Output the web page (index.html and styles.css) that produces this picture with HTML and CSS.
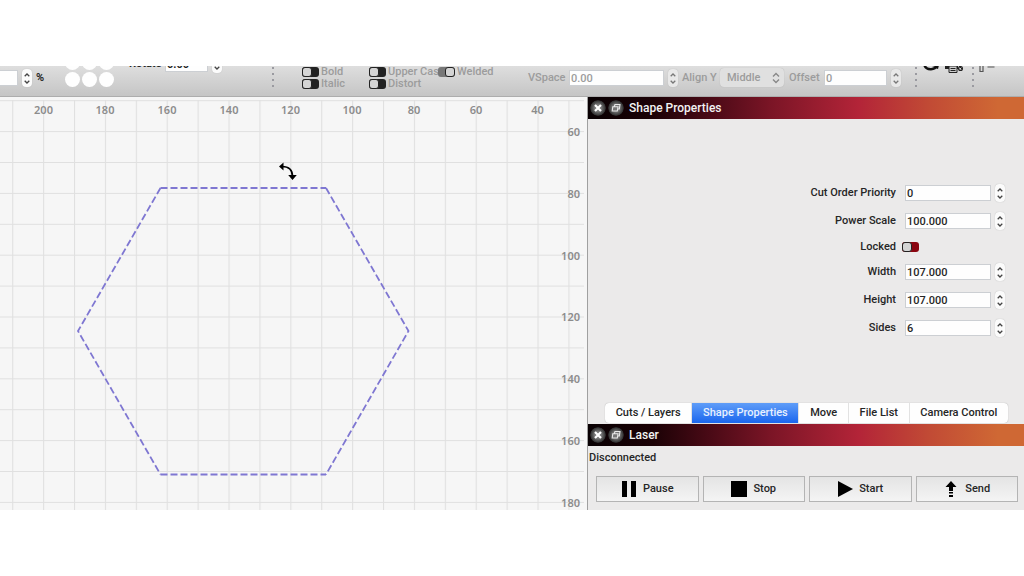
FILE: index.html
```html
<!DOCTYPE html>
<html lang="en">
<head>
<meta charset="utf-8">
<title>Shape Properties</title>
<link rel="stylesheet" href="styles.css">
</head>
<body>
<svg class="symbols" aria-hidden="true">
  <symbol id="up" viewBox="0 0 6 4"><path d="M.7 3.2 3 1l2.300 2.200" fill="none" stroke="currentColor" stroke-width="1.300"/></symbol>
  <symbol id="down" viewBox="0 0 6 4"><path d="M.7.8 3 3 5.300.8" fill="none" stroke="currentColor" stroke-width="1.300"/></symbol>
  <symbol id="close" viewBox="0 0 16 16"><path d="M5 5l6 6M11 5l-6 6" stroke="#fff" stroke-width="2.200"/></symbol>
  <symbol id="float" viewBox="0 0 16 16"><path d="M6.300 6.500 7 4.500H12L11.300 9H10M4.800 6.800H10L9.300 11H4.200Z" fill="none" stroke="#e8e8e8" stroke-width="1.100"/></symbol>
</svg>
<main class="app">
  <header class="toolbar">
    <div class="group scale">
      <input class="field" id="scale" type="text" aria-label="Scale percent">
      <span class="stepper"><button aria-label="Increase scale"><svg><use href="#up"/></svg></button><button aria-label="Decrease scale"><svg><use href="#down"/></svg></button></span>
      <label class="dark" for="scale">%</label>
    </div>
    <div class="anchors" role="group" aria-label="Anchor point">
      <input type="radio" name="anchor" aria-label="Top left"><input type="radio" name="anchor" aria-label="Top"><input type="radio" name="anchor" aria-label="Top right">
      <input type="radio" name="anchor" aria-label="Left"><input type="radio" name="anchor" aria-label="Center"><input type="radio" name="anchor" aria-label="Right">
      <input type="radio" name="anchor" aria-label="Bottom left"><input type="radio" name="anchor" aria-label="Bottom"><input type="radio" name="anchor" aria-label="Bottom right">
    </div>
    <div class="group rotate">
      <label class="dark" for="rotate">Rotate</label>
      <input class="field dark" id="rotate" type="text" value="0.00">
      <span class="stepper"><button aria-label="Increase rotation"><svg><use href="#up"/></svg></button><button aria-label="Decrease rotation"><svg><use href="#down"/></svg></button></span>
    </div>
    <div class="dots"></div>
    <div class="checks weight">
      <label><input class="toggle" type="checkbox">Bold</label>
      <label><input class="toggle" type="checkbox">Italic</label>
    </div>
    <div class="checks casing">
      <label><input class="toggle" type="checkbox">Upper Case</label>
      <label><input class="toggle" type="checkbox">Distort</label>
    </div>
    <div class="checks welded">
      <label><input class="toggle" type="checkbox" checked>Welded</label>
    </div>
    <div class="group vspace">
      <label for="vspace">VSpace</label>
      <input class="field" id="vspace" type="text" value="0.00">
      <span class="stepper"><button aria-label="Increase VSpace"><svg><use href="#up"/></svg></button><button aria-label="Decrease VSpace"><svg><use href="#down"/></svg></button></span>
    </div>
    <div class="group align">
      <label for="align">Align Y</label>
      <span class="select"><select id="align"><option>Middle</option></select><svg viewBox="0 0 8 12"><path d="M1 4.500 4 1.500l3 3M1 7.500l3 3 3-3" fill="none" stroke="currentColor" stroke-width="1.400"/></svg></span>
    </div>
    <div class="group offset">
      <label for="offset">Offset</label>
      <input class="field" id="offset" type="text" value="0">
      <span class="stepper"><button aria-label="Increase offset"><svg><use href="#up"/></svg></button><button aria-label="Decrease offset"><svg><use href="#down"/></svg></button></span>
    </div>
    <div class="dots"></div>
    <div class="tools">
      <button aria-label="Refresh"><svg width="18" height="18" viewBox="0 0 18 18"><path d="M2.500 9.500a6.500 5.500 0 0 0 12.500-.5" fill="none" stroke="#111" stroke-width="2.400"/><path d="M10 11l7-2-1 4Z" fill="#111"/></svg></button>
      <button aria-label="Print and cut"><svg width="20" height="18" viewBox="0 0 20 18"><path d="M1 8h13v5H1Z" fill="#222"/><path d="M5 10h8v6.500H5Z" fill="#ccc" stroke="#222"/><path d="M6.500 12.500h5M6.500 14.500h5M13 8l5 5" stroke="#222"/><circle cx="16.500" cy="12.500" r="1.900" fill="none" stroke="#222" stroke-width="1.300"/></svg></button>
    </div>
    <div class="dots last"></div>
    <div class="tools">
      <button aria-label="Align"><svg width="18" height="18" viewBox="0 0 18 18"><path d="M1 6h3v9.500H1ZM8.500 11h7" fill="none" stroke="#555" stroke-width="1.200"/></svg></button>
    </div>
  </header>
  <div class="workspace">
    <section class="canvas" aria-label="Drawing canvas">
      <svg viewBox="0 0 587 413" preserveAspectRatio="xMaxYMin slice">
        <defs><pattern id="grid" x="12.200" y="3.200" width="30.900" height="30.900" patternUnits="userSpaceOnUse"><path d="M.5 0V31M0 .5H31" stroke="#e0e0e0" stroke-width="1.200"/></pattern></defs>
        <rect y="3" width="584" height="410" fill="url(#grid)"/>
        <g class="rule top">
          <text x="43.500" y="17">200</text><text x="105" y="17">180</text><text x="167" y="17">160</text><text x="229" y="17">140</text><text x="290.500" y="17">120</text><text x="352" y="17">100</text><text x="414" y="17">80</text><text x="476" y="17">60</text><text x="537.500" y="17">40</text>
        </g>
        <g class="rule side">
          <text x="580" y="39">60</text><text x="580" y="101">80</text><text x="580" y="163">100</text><text x="580" y="224">120</text><text x="580" y="286">140</text><text x="580" y="348">160</text><text x="580" y="410">180</text>
        </g>
        <g class="shape">
          <path d="M160.500 91H326"/><path d="M326 91 408.500 234 326 377.500"/><path d="M160.500 377.500H326"/><path d="M160.500 91 78 234l82.500 143.500"/>
        </g>
        <g><path d="M282 69.500c7 0 10.500 3 10.500 10" fill="none" stroke="#000" stroke-width="1.700"/><path d="M279 69.500l4.500-4v8ZM292.500 83l-4.300-5h8.600Z"/></g>
      </svg>
    </section>
    <aside class="panel">
      <header class="titlebar"><button aria-label="Close Shape Properties"><svg><use href="#close"/></svg></button><button aria-label="Float Shape Properties"><svg><use href="#float"/></svg></button><h2>Shape Properties</h2></header>
      <form class="props">
        <label for="priority">Cut Order Priority</label>
        <div class="spin"><input class="field" id="priority" type="text" value="0"><span class="stepper"><button type="button" aria-label="Increase priority"><svg><use href="#up"/></svg></button><button type="button" aria-label="Decrease priority"><svg><use href="#down"/></svg></button></span></div>
        <label for="power">Power Scale</label>
        <div class="spin"><input class="field" id="power" type="text" value="100.000"><span class="stepper"><button type="button" aria-label="Increase power"><svg><use href="#up"/></svg></button><button type="button" aria-label="Decrease power"><svg><use href="#down"/></svg></button></span></div>
        <label for="locked">Locked</label>
        <input class="toggle red" id="locked" type="checkbox">
        <label for="width">Width</label>
        <div class="spin"><input class="field" id="width" type="text" value="107.000"><span class="stepper"><button type="button" aria-label="Increase width"><svg><use href="#up"/></svg></button><button type="button" aria-label="Decrease width"><svg><use href="#down"/></svg></button></span></div>
        <label for="height">Height</label>
        <div class="spin"><input class="field" id="height" type="text" value="107.000"><span class="stepper"><button type="button" aria-label="Increase height"><svg><use href="#up"/></svg></button><button type="button" aria-label="Decrease height"><svg><use href="#down"/></svg></button></span></div>
        <label for="sides">Sides</label>
        <div class="spin"><input class="field" id="sides" type="text" value="6"><span class="stepper"><button type="button" aria-label="Increase sides"><svg><use href="#up"/></svg></button><button type="button" aria-label="Decrease sides"><svg><use href="#down"/></svg></button></span></div>
      </form>
      <nav class="tabs" role="tablist">
        <button role="tab">Cuts / Layers</button><button role="tab" class="active" aria-selected="true">Shape Properties</button><button role="tab">Move</button><button role="tab">File List</button><button role="tab">Camera Control</button>
      </nav>
      <header class="titlebar"><button aria-label="Close Laser"><svg><use href="#close"/></svg></button><button aria-label="Float Laser"><svg><use href="#float"/></svg></button><h2>Laser</h2></header>
      <p class="status">Disconnected</p>
      <div class="actions">
        <button><svg viewBox="0 0 16 16"><path d="M1 0h5v16H1ZM10 0h5v16h-5Z"/></svg>Pause</button>
        <button><svg viewBox="0 0 16 16"><path d="M0 0h16v16H0Z"/></svg>Stop</button>
        <button><svg viewBox="0 0 16 16"><path d="M1 0l15 8-15 8Z"/></svg>Start</button>
        <button><svg viewBox="0 0 16 16"><path d="M8 0l5.500 6H10v4H6V6H2.500ZM6 11h4v1.500H6ZM6 14h4v2H6Z"/></svg>Send</button>
      </div>
    </aside>
  </div>
</main>
</body>
</html>
```
FILE: styles.css
```css
* { box-sizing: border-box; }

body {
  margin: 0;
  min-height: 100vh;
  display: flex;
  flex-direction: column;
  justify-content: center;
  background: #fff;
  color: #262626;
  font: 500 11px/14px Roboto, "Liberation Sans", sans-serif;
}

button, input, select { font: inherit; color: inherit; margin: 0; padding: 0; border: 0; }
button { background: none; }
.symbols { display: none; }

.app { overflow: hidden; }

.toolbar {
  display: flex;
  align-items: flex-end;
  height: 31px;
  padding-bottom: 9px;
  overflow: hidden;
  white-space: nowrap;
  color: #9c9c9c;
  background: linear-gradient(#dedede, #c5c5c5);
  border-bottom: 1px solid #adadad;
}
.toolbar > * { flex: none; }
.toolbar .dark { color: #262626; font-weight: 700; }

.group { display: flex; align-items: center; gap: 4px; }

.field {
  height: 16px;
  padding: 0 1px;
  background: #fefefe;
  border: 1px solid #cccfd3;
  outline: 0;
  min-width: 0;
}

.stepper {
  flex: none;
  display: flex;
  flex-direction: column;
  width: 10px;
  height: 18px;
  padding: 2px 0;
  border-radius: 4px;
  background: #fbfbfb;
  box-shadow: 0 0 1px #aaa;
  color: #444;
}
.stepper button { flex: 1; display: flex; align-items: center; justify-content: center; }
.stepper svg { width: 6px; height: 4px; }

.scale .field { width: 18px; border-left: 0; }
.scale label { width: 10px; }
.anchors {
  display: grid;
  grid-template-columns: repeat(3, 15px);
  gap: 2px;
  margin-left: 19px;
}
.anchors input { appearance: none; width: 15px; height: 15px; border-radius: 50%; background: #fefefe; }
.rotate { margin: 0 0 14px 15px; }
.rotate label { width: 32px; }
.rotate .field { width: 43px; }

.dots {
  width: 2px;
  height: 22px;
  background: radial-gradient(circle, #9a9aa0 1px, transparent 1px) 0 0 / 2px 6px;
}
.rotate + .dots { margin-left: 50px; }

.checks { display: grid; grid-auto-rows: 12px; align-self: flex-start; }
.checks label { display: flex; align-items: center; gap: 2px; }
.weight { width: 67px; margin-left: 28px; }
.casing { width: 69px; }
.welded { width: 90px; }

.toggle {
  appearance: none;
  flex: none;
  width: 17px;
  height: 10px;
  border-radius: 3px;
  background: #222;
  display: flex;
}
.toggle::before {
  content: "";
  width: 8px;
  border: 1px solid #222;
  border-radius: 3px;
  background: #d4d4d4;
}
.toggle:checked { background: #777; justify-content: flex-end; }
.toggle.red { background: #8a0510; }

.vspace label { width: 37px; }
.vspace .field { width: 95px; }
.vspace .stepper, .offset .stepper { background: #e8e8e8; color: #777; }
.align { margin-left: 4px; gap: 6px; }
.align label { width: 32px; }
.select {
  display: flex;
  align-items: center;
  width: 64px;
  height: 19px;
  padding: 0 4px 0 7px;
  border-radius: 4px;
  background: #e0e0e0;
  box-shadow: 0 0 1px #aaa;
}
.select select { appearance: none; flex: 1; min-width: 0; background: none; }
.select svg { width: 8px; height: 12px; color: #888; }
.offset { margin-left: 5px; }
.offset label { width: 31px; }
.offset .field { width: 63px; }
.offset + .dots { margin-left: 14px; }
.tools { display: flex; gap: 4px; align-self: flex-start; margin: -10px 8px 0 5px; }
.tools svg { display: block; }

.workspace { display: grid; grid-template-columns: 587fr 437fr; }

.canvas { position: relative; background: #f6f6f6; overflow: hidden; }
.canvas svg { position: absolute; inset: 0; width: 100%; height: 100%; }
.rule { font: 600 11px "Noto Sans", sans-serif; fill: #8c8c8c; }
.rule.top { text-anchor: middle; }
.rule.side { text-anchor: end; }
.shape { fill: none; stroke: #7f77d2; stroke-width: 1.800; stroke-dasharray: 7 3; }

.panel { background: #ebeaea; min-width: 0; border-left: 1px solid #a0a0a0; }

.titlebar {
  display: flex;
  align-items: center;
  gap: 2px;
  height: 22px;
  padding-left: 2px;
  color: #f2f2f2;
  background: linear-gradient(90deg, #080002, #1c0206 15%, #4a0a16 28%, #7b1526 42%, #b32438 62%, #c14a35 78%, #cf6834 94%, #cf6834);
}
.titlebar button { width: 16px; height: 16px; border-radius: 50%; background: radial-gradient(circle, #777 30%, #333 65%, transparent 72%); }
.titlebar svg { display: block; width: 16px; height: 16px; }
.titlebar h2 { margin: 0 0 0 3px; font-size: 12px; font-weight: 500; }

.props {
  display: grid;
  grid-template-columns: 1fr 100px;
  gap: 10px 9px;
  align-items: center;
  padding: 65px 19px 66px 0;
}
.props label { text-align: right; }
.props label[for="locked"] { line-height: 13px; }
.props .spin { display: flex; align-items: center; gap: 4px; }
.props .field { width: 86px; }
.props .toggle { margin-left: -3px; }

.tabs { display: flex; margin: 0 16px 0 17px; height: 20px; border-radius: 4px; background: #fefefe; box-shadow: 0 0 1px #999; overflow: hidden; }
.tabs button { flex: 1 1 auto; padding: 0 4px; border-right: 1px solid #e2e2e2; }
.tabs button:last-child { border-right: 0; }
.tabs .active { color: #e8f1ff; background: linear-gradient(#5f9df8, #1a66ee); }
.tabs + .titlebar { margin-top: 1px; }

.status { margin: 5px 0 11px 1px; }
.actions { display: grid; grid-template-columns: repeat(4, 1fr); gap: 4px; padding: 0 6px 8px 8px; }
.actions button {
  display: flex;
  align-items: center;
  justify-content: center;
  gap: 6px;
  height: 26px;
  border: 1px solid #b4b4b4;
  background: linear-gradient(#e4e4e4, #f4f4f4);
}
.actions svg { width: 16px; height: 16px; }
```
